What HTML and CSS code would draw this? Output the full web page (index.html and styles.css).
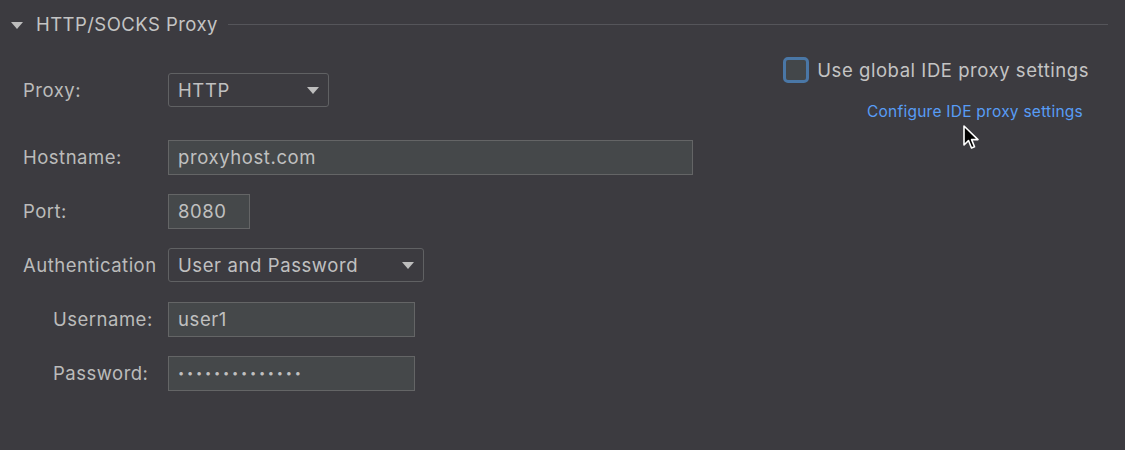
FILE: index.html
```html
<!DOCTYPE html>
<html>
<head>
<meta charset="utf-8">
<link rel="stylesheet" href="styles.css">
</head>
<body>
<div class="page">
  <div class="section-head">
    <span class="caret"></span>
    <span class="section-title">HTTP/SOCKS Proxy</span>
    <span class="rule"></span>
  </div>
  <div class="content">
    <div class="form">
      <div class="row row-first">
        <label class="label">Proxy:</label>
        <div class="combo combo-proxy"><span>HTTP</span><span class="arrow"></span></div>
      </div>
      <div class="row">
        <label class="label">Hostname:</label>
        <div class="field field-host">proxyhost.com</div>
      </div>
      <div class="row">
        <label class="label">Port:</label>
        <div class="field field-port">8080</div>
      </div>
      <div class="row">
        <label class="label">Authentication</label>
        <div class="combo combo-auth"><span>User and Password</span><span class="arrow"></span></div>
      </div>
      <div class="row">
        <label class="label label-sub">Username:</label>
        <div class="field field-cred">user1</div>
      </div>
      <div class="row">
        <label class="label label-sub">Password:</label>
        <div class="field field-cred dots">••••••••••••••</div>
      </div>
    </div>
    <div class="side">
      <div class="check-row">
        <span class="checkbox"></span>
        <span class="check-label">Use global IDE proxy settings</span>
      </div>
      <a class="link">Configure IDE proxy settings</a>
    </div>
  </div>
  <svg class="cursor" width="20" height="28" viewBox="0 0 20 28">
    <path d="M2 2 L2 21 L6.5 16.5 L9.5 24 L12.5 22.8 L9.6 15.6 L16 15.6 Z" fill="#000" stroke="#fff" stroke-width="1.6" stroke-linejoin="round"/>
  </svg>
</div>
</body>
</html>
```

FILE: styles.css
```css
html, body {
  margin: 0;
  padding: 0;
}
body {
  background: #3c3b40;
  font-family: Inter, "Liberation Sans", sans-serif;
  color: #bbbbbb;
  width: 1125px;
  height: 450px;
  overflow: hidden;
}
.page {
  position: relative;
  height: 450px;
}
.section-head {
  display: flex;
  align-items: center;
  height: 48px;
  padding-left: 11px;
  padding-right: 17px;
}
.caret {
  width: 0;
  height: 0;
  border-left: 6px solid transparent;
  border-right: 6px solid transparent;
  border-top: 7px solid #bdbdbd;
  margin-right: 13px;
  margin-top: 2px;
}
.section-title {
  font-size: 18.5px;
  color: #c4c4c4;
  letter-spacing: 0.45px;
}
.rule {
  flex: 1;
  height: 1px;
  background: #55555a;
  margin-left: 10px;
}
.content {
  display: flex;
  align-items: flex-start;
}
.form {
  display: flex;
  flex-direction: column;
  gap: 20px;
  padding-top: 25px;
  padding-left: 23px;
}
.row {
  display: flex;
  align-items: center;
  height: 34px;
}
.row-first {
  margin-bottom: 13px;
}
.label {
  width: 145px;
  font-size: 18.5px;
  letter-spacing: 0.5px;
  color: #bbbbbb;
  white-space: nowrap;
}
.label-sub {
  padding-left: 30px;
  width: 115px;
}
.combo {
  box-sizing: border-box;
  height: 34px;
  border: 1px solid #606163;
  border-radius: 3px;
  display: flex;
  align-items: center;
  justify-content: space-between;
  padding: 0 9px 0 9px;
  font-size: 18.5px;
  letter-spacing: 0.6px;
  color: #c0c0c0;
}
.combo-proxy { width: 161px; }
.combo-auth { width: 256px; }
.arrow {
  width: 0;
  height: 0;
  border-left: 6px solid transparent;
  border-right: 6px solid transparent;
  border-top: 7px solid #bdbdbd;
}
.field {
  box-sizing: border-box;
  height: 35px;
  background: #45484a;
  border: 1px solid #646566;
  display: flex;
  align-items: center;
  padding-left: 9px;
  font-size: 18.5px;
  letter-spacing: 0.6px;
  color: #c0c0c0;
}
.field-host { width: 525px; }
.field-port { width: 82px; }
.field-cred { width: 247px; }
.dots {
  font-size: 11px;
  letter-spacing: 2.8px;
}
.side {
  margin-left: auto;
  margin-right: 36px;
  padding-top: 9px;
  display: flex;
  flex-direction: column;
  align-items: flex-end;
}
.check-row {
  display: flex;
  align-items: center;
}
.checkbox {
  box-sizing: border-box;
  width: 26px;
  height: 26px;
  border: 3px solid #4a77a6;
  border-radius: 5px;
  background: #43474a;
  margin-right: 8px;
}
.check-label {
  font-size: 18.5px;
  letter-spacing: 0.55px;
  color: #c4c4c4;
}
.link {
  margin-top: 19px;
  margin-right: 6px;
  font-size: 15.5px;
  letter-spacing: 0.25px;
  color: #589df6;
}
.cursor {
  position: absolute;
  left: 962px;
  top: 124px;
}
```
